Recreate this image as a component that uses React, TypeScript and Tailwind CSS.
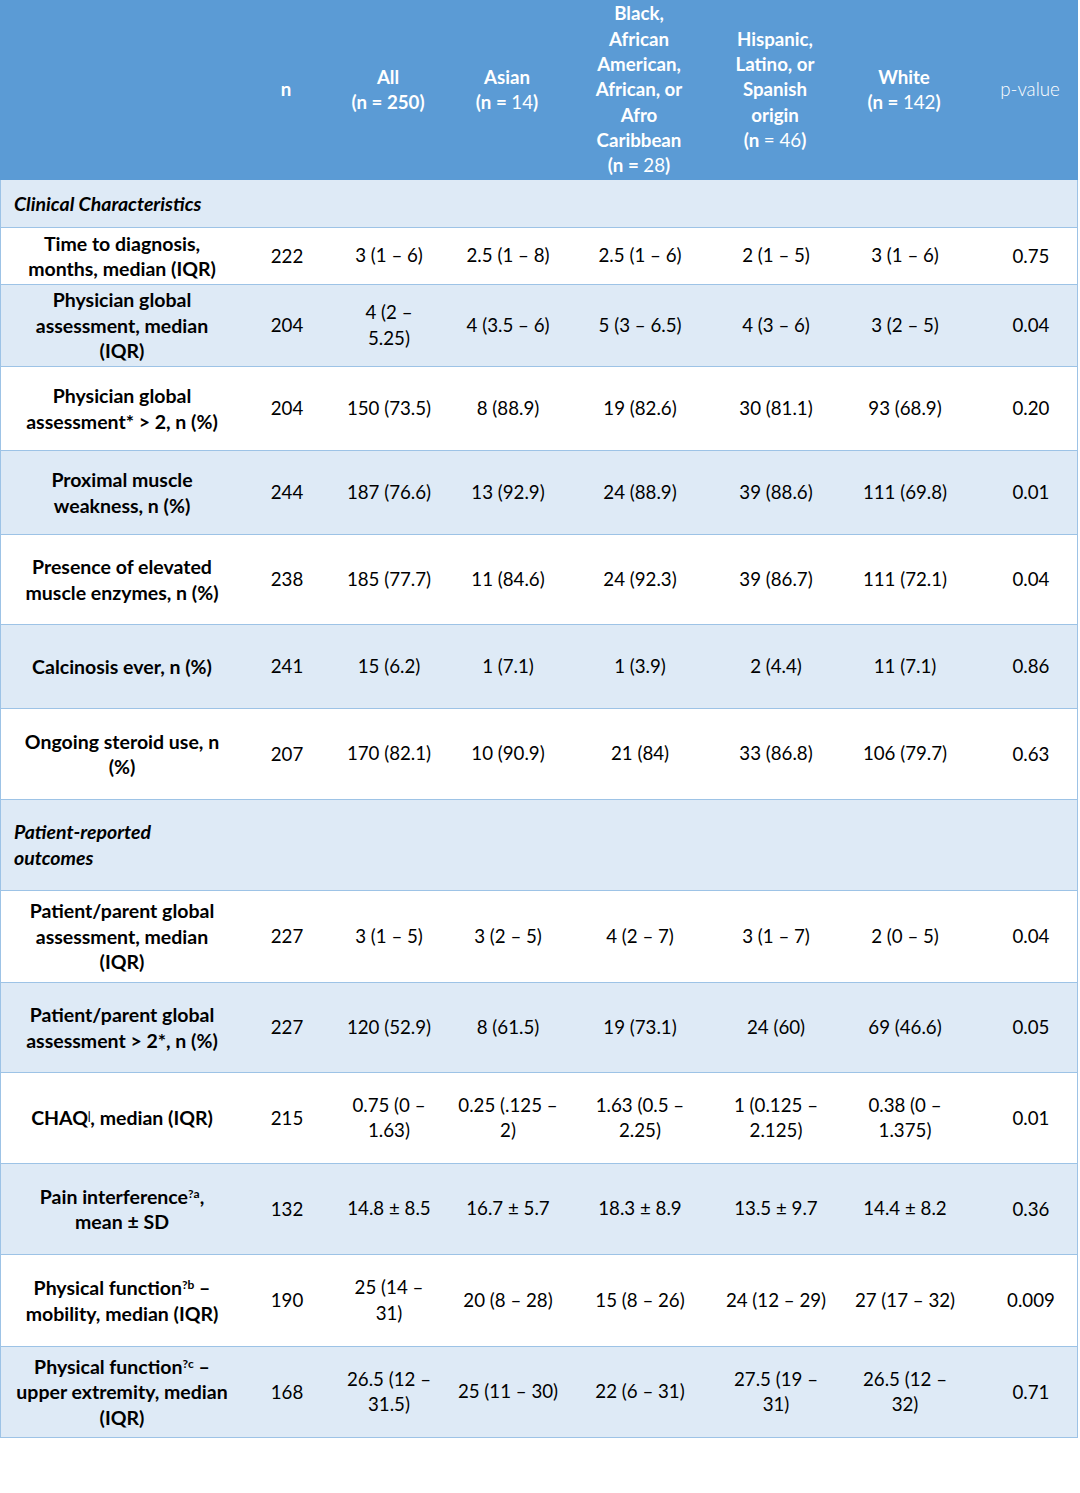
import React from 'react';

type Row = {
  label: React.ReactNode;
  n: string;
  vals: React.ReactNode[];
  p: string;
  h: string;
};

const cols = 'grid grid-cols-[242px_88px_116px_122px_142px_130px_128px_110px]';

const rows: Row[] = [
  { label: <>Time to diagnosis,<br />months, median (IQR)</>, n: '222', vals: ['3 (1 – 6)', '2.5 (1 – 8)', '2.5 (1 – 6)', '2 (1 – 5)', '3 (1 – 6)'], p: '0.75', h: 'h-[57px]' },
  { label: <>Physician global<br />assessment, median<br />(IQR)</>, n: '204', vals: [<>4 (2 –<br />5.25)</>, '4 (3.5 – 6)', '5 (3 – 6.5)', '4 (3 – 6)', '3 (2 – 5)'], p: '0.04', h: 'h-[82px]' },
  { label: <>Physician global<br />assessment* &gt; 2, n (%)</>, n: '204', vals: ['150 (73.5)', '8 (88.9)', '19 (82.6)', '30 (81.1)', '93 (68.9)'], p: '0.20', h: 'h-[84px]' },
  { label: <>Proximal muscle<br />weakness, n (%)</>, n: '244', vals: ['187 (76.6)', '13 (92.9)', '24 (88.9)', '39 (88.6)', '111 (69.8)'], p: '0.01', h: 'h-[84px]' },
  { label: <>Presence of elevated<br />muscle enzymes, n (%)</>, n: '238', vals: ['185 (77.7)', '11 (84.6)', '24 (92.3)', '39 (86.7)', '111 (72.1)'], p: '0.04', h: 'h-[90px]' },
  { label: <>Calcinosis ever, n (%)</>, n: '241', vals: ['15 (6.2)', '1 (7.1)', '1 (3.9)', '2 (4.4)', '11 (7.1)'], p: '0.86', h: 'h-[84px]' },
  { label: <>Ongoing steroid use, n<br />(%)</>, n: '207', vals: ['170 (82.1)', '10 (90.9)', '21 (84)', '33 (86.8)', '106 (79.7)'], p: '0.63', h: 'h-[91px]' },
];

const rows2: Row[] = [
  { label: <>Patient/parent global<br />assessment, median<br />(IQR)</>, n: '227', vals: ['3 (1 – 5)', '3 (2 – 5)', '4 (2 – 7)', '3 (1 – 7)', '2 (0 – 5)'], p: '0.04', h: 'h-[92px]' },
  { label: <>Patient/parent global<br />assessment &gt; 2*, n (%)</>, n: '227', vals: ['120 (52.9)', '8 (61.5)', '19 (73.1)', '24 (60)', '69 (46.6)'], p: '0.05', h: 'h-[90px]' },
  { label: <>CHAQ<sup className="text-[11px]">ǀ</sup>, median (IQR)</>, n: '215', vals: [<>0.75 (0 –<br />1.63)</>, <>0.25 (.125 –<br />2)</>, <>1.63 (0.5 –<br />2.25)</>, <>1 (0.125 –<br />2.125)</>, <>0.38 (0 –<br />1.375)</>], p: '0.01', h: 'h-[91px]' },
  { label: <>Pain interference<sup className="text-[12px]">?a</sup>,<br />mean ± SD</>, n: '132', vals: ['14.8 ± 8.5', '16.7 ± 5.7', '18.3 ± 8.9', '13.5 ± 9.7', '14.4 ± 8.2'], p: '0.36', h: 'h-[91px]' },
  { label: <>Physical function<sup className="text-[12px]">?b</sup> –<br />mobility, median (IQR)</>, n: '190', vals: [<>25 (14 –<br />31)</>, '20 (8 – 28)', '15 (8 – 26)', '24 (12 – 29)', '27 (17 – 32)'], p: '0.009', h: 'h-[92px]' },
  { label: <>Physical function<sup className="text-[12px]">?c</sup> –<br />upper extremity, median<br />(IQR)</>, n: '168', vals: [<>26.5 (12 –<br />31.5)</>, '25 (11 – 30)', '22 (6 – 31)', <>27.5 (19 –<br />31)</>, <>26.5 (12 –<br />32)</>], p: '0.71', h: 'h-[91px]' },
];

function DataRow({ row, shaded }: { row: Row; shaded: boolean }) {
  return (
    <div className={`${cols} ${row.h} items-center border-b border-x border-[#9dc3e6] ${shaded ? 'bg-[#deeaf6]' : 'bg-white'}`}>
      <div className="text-center font-bold text-[19.5px] leading-[25.5px]">{row.label}</div>
      <div className="text-center">{row.n}</div>
      {row.vals.map((v, i) => (
        <div key={i} className="text-center leading-[25.5px]">{v}</div>
      ))}
      <div className="text-center pl-[14px]">{row.p}</div>
    </div>
  );
}

function Section({ children, h }: { children: React.ReactNode; h: string }) {
  return (
    <div className={`${h} flex items-center border-b border-x border-[#9dc3e6] bg-[#deeaf6] pl-[13px] font-bold italic text-[19.5px] leading-[26px]`}>
      <div>{children}</div>
    </div>
  );
}

export default function App() {
  return (
    <div className="w-[1080px] min-h-[1493px] bg-white text-black text-[18.7px]" style={{ fontFamily: 'Lato, "Open Sans", sans-serif' }}>
      <div className="w-[1078px]">
        {/* header */}
        <div className={`${cols} h-[180px] items-center bg-[#5b9bd5] text-white leading-[25.3px]`}>
          <div />
          <div className="text-center font-bold">n</div>
          <div className="text-center font-bold">All<br />(n = 250)</div>
          <div className="text-center font-bold">Asian<br />(n = <span className="font-normal">14</span>)</div>
          <div className="text-center font-bold">Black,<br />African<br />American,<br />African, or<br />Afro<br />Caribbean<br />(n = <span className="font-normal">28</span>)</div>
          <div className="text-center font-bold">Hispanic,<br />Latino, or<br />Spanish<br />origin<br />(n <span className="font-normal">= 46</span>)</div>
          <div className="text-center font-bold">White<br />(n = <span className="font-normal">142</span>)</div>
          <div className="text-center pl-[14px] font-light">p-value</div>
        </div>

        <Section h="h-[48px]">Clinical Characteristics</Section>
        {rows.map((r, i) => (
          <DataRow key={i} row={r} shaded={i % 2 === 1} />
        ))}
        <Section h="h-[91px]">Patient-reported<br />outcomes</Section>
        {rows2.map((r, i) => (
          <DataRow key={i} row={r} shaded={i % 2 === 1} />
        ))}
      </div>
    </div>
  );
}
